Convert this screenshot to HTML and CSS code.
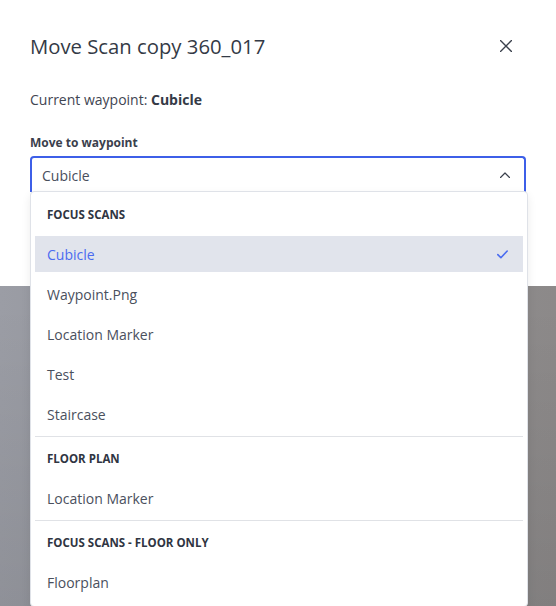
FILE: index.html
```html
<!DOCTYPE html>
<html lang="en">
<head>
<meta charset="utf-8">
<title>Move Scan</title>
<link rel="stylesheet" href="styles.css">
</head>
<body>
<div class="page">
  <div class="modal">
    <div class="modal-header">
      <h1 class="title">Move Scan copy 360_017</h1>
      <button class="close" aria-label="Close">
        <svg width="12" height="12" viewBox="0 0 12 12"><path d="M0.5 0.5 L11.5 11.5 M11.5 0.5 L0.5 11.5" stroke="#3a404c" stroke-width="1.4" fill="none" stroke-linecap="round"/></svg>
      </button>
    </div>
    <p class="current">Current waypoint: <strong>Cubicle</strong></p>
    <label class="field-label">Move to waypoint</label>
    <div class="select-wrap">
      <div class="select">
        <span>Cubicle</span>
        <svg class="chevron" width="10" height="6" viewBox="0 0 10 6"><path d="M0.5 5.5 L5 1 L9.5 5.5" stroke="#3a404c" stroke-width="1.2" fill="none" stroke-linecap="round" stroke-linejoin="round"/></svg>
      </div>
      <div class="menu">
        <div class="group">
          <div class="group-title">FOCUS SCANS</div>
          <div class="item selected">
            <span>Cubicle</span>
            <svg width="11" height="9" viewBox="0 0 11 9"><path d="M0.8 4.6 L3.9 7.7 L10.2 1" stroke="#4a6cf0" stroke-width="1.6" fill="none" stroke-linecap="round" stroke-linejoin="round"/></svg>
          </div>
          <div class="item">Waypoint.Png</div>
          <div class="item">Location Marker</div>
          <div class="item">Test</div>
          <div class="item">Staircase</div>
        </div>
        <div class="group">
          <div class="group-title">FLOOR PLAN</div>
          <div class="item">Location Marker</div>
        </div>
        <div class="group">
          <div class="group-title">FOCUS SCANS - FLOOR ONLY</div>
          <div class="item">Floorplan</div>
        </div>
      </div>
    </div>
  </div>
</div>
</body>
</html>
```

FILE: styles.css
```css
* { box-sizing: border-box; }
html, body {
  margin: 0;
  padding: 0;
  height: 100%;
}
body {
  font-family: "Open Sans", "Noto Sans", sans-serif;
  color: #484e5c;
  overflow: hidden;
  background:
    linear-gradient(to bottom, rgba(0,0,0,0) 0%, rgba(0,0,0,0) 50%, rgba(0,0,0,0.03) 70%, rgba(0,0,0,0.08) 100%),
    linear-gradient(to right, #9b9da5 0%, #909196 40%, #8f8e8f 75%, #8c8989 100%);
}
.page {
  width: 556px;
  height: 606px;
}
.modal {
  background: #fff;
  height: 286px;
  padding: 32px 30px 0 30px;
}
.modal-header {
  display: flex;
  align-items: center;
  justify-content: space-between;
  height: 28px;
}
.title {
  margin: 0;
  font-size: 20.3px;
  line-height: 28px;
  font-weight: 400;
  color: #343a46;
}
.close {
  width: 40px;
  height: 28px;
  border: 0;
  background: transparent;
  padding: 0;
  display: flex;
  align-items: center;
  justify-content: center;
}
.current {
  margin: 30px 0 0 0;
  font-size: 14px;
  line-height: 20px;
  color: #3f4552;
}
.current strong {
  font-weight: 700;
  color: #343a46;
}
.field-label {
  display: block;
  margin-top: 25px;
  font-size: 12px;
  line-height: 16px;
  font-weight: 700;
  color: #3a404c;
}
.select-wrap {
  position: relative;
  margin-top: 5px;
}
.select {
  height: 36px;
  border: 2px solid #3d5fe8;
  border-bottom: 0;
  border-radius: 4px 4px 0 0;
  display: flex;
  align-items: center;
  justify-content: space-between;
  padding: 0 14px 0 10px;
  font-size: 14px;
  color: #484e5c;
}
.menu {
  position: absolute;
  top: 35px;
  left: 0;
  width: 498px;
  background: #fff;
  border: 1px solid #dfe2e8;
  border-radius: 4px;
  box-shadow: 0 4px 10px rgba(0,0,0,0.08);
  padding: 2px 4px 4px 4px;
}
.group {
  display: flex;
  flex-direction: column;
}
.group + .group {
  border-top: 1px solid #e0e2e6;
  margin-top: 2px;
  padding-top: 1px;
}
.group-title {
  height: 40px;
  display: flex;
  align-items: center;
  padding-left: 12px;
  font-size: 11.5px;
  font-weight: 700;
  color: #2f3542;
}
.item {
  height: 36px;
  margin: 2px 0;
  display: flex;
  align-items: center;
  justify-content: space-between;
  padding: 0 15px 0 12px;
  font-size: 14px;
  color: #4a505d;
}
.item.selected {
  background: #e1e4ec;
  color: #4b6bf0;
}
```
